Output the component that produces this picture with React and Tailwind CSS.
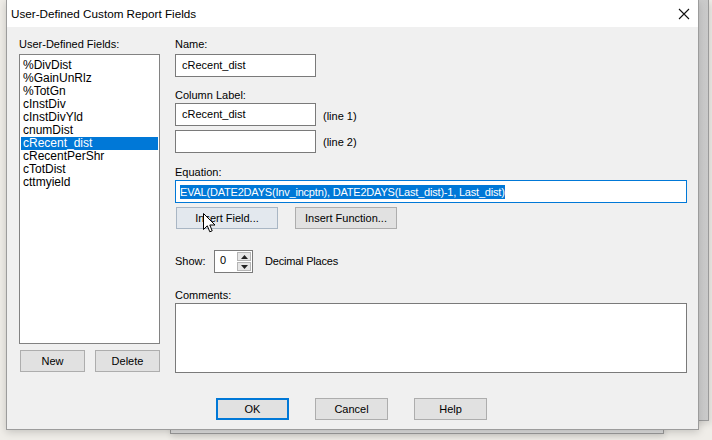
import React from 'react';

const font = { fontFamily: '"Liberation Sans", Arial, sans-serif' };

const fields = [
  '%DivDist',
  '%GainUnRlz',
  '%TotGn',
  'cInstDiv',
  'cInstDivYld',
  'cnumDist',
  'cRecent_dist',
  'cRecentPerShr',
  'cTotDist',
  'cttmyield',
];

const Btn = ({ children, className = '' }) => (
  <div
    className={`flex items-center justify-center h-[22px] bg-[#e1e1e1] border border-[#adadad] text-[11px] text-black ${className}`}
  >
    {children}
  </div>
);

const TextBox = ({ value, className = '' }) => (
  <div className={`h-[23px] bg-white border border-[#7a7a7a] flex items-center px-[6px] text-[11px] text-black ${className}`}>
    {value}
  </div>
);

const Cursor = () => (
  <svg width="13" height="21" viewBox="0 0 13 21" className="absolute left-[203px] top-[213px]">
    <path
      d="M0.5 0.5 L0.5 16.5 L4.3 12.8 L6.8 18.8 L9.2 17.8 L6.8 12 L12 12 Z"
      fill="white"
      stroke="black"
      strokeWidth="1"
      strokeLinejoin="miter"
    />
  </svg>
);

export default function App() {
  return (
    <div className="relative w-[712px] h-[440px] overflow-hidden bg-[#efede8]" style={font}>
      {/* windows behind */}
      <div className="absolute left-[660px] top-0 w-[49px] h-[421px] bg-gradient-to-r from-[#e4e4e4] to-[#c9c9c9] border-r border-b border-[#9a9a9a] shadow-[2px_3px_6px_rgba(0,0,0,0.12)]" />
      <div className="absolute left-[170px] top-[380px] w-[494px] h-[54px] bg-[#dedede] border border-[#9a9a9a] shadow-[1px_3px_6px_rgba(0,0,0,0.12)]" />

      {/* main dialog */}
      <div className="absolute left-[6px] top-0 w-[693px] h-[430px] bg-[#f0f0f0] border-l border-r border-b border-[#9c9c9c] shadow-[0_2px_8px_rgba(0,0,0,0.18)] flex flex-col">
        <div className="h-[27px] bg-white flex items-center justify-between pl-[4px] pr-[8px] shrink-0">
          <span className="text-[11.7px] text-black">User-Defined Custom Report Fields</span>
          <svg width="12" height="12" viewBox="0 0 12 12">
            <path d="M1 1 L11 11 M11 1 L1 11" stroke="#111" strokeWidth="1.1" />
          </svg>
        </div>

        <div className="flex pl-[12px] pt-[11px]">
          {/* left column */}
          <div className="w-[141px] flex flex-col">
            <div className="h-[13px] leading-[13px] text-[11px] text-black">User-Defined Fields:</div>
            <div className="mt-[3px] h-[290px] bg-white border border-[#828282] pt-[4px] px-[1px]">
              {fields.map((f) => (
                <div
                  key={f}
                  className={`h-[13px] leading-[13px] px-[2px] text-[12px] ${
                    f === 'cRecent_dist' ? 'bg-[#0078d7] text-white' : 'text-black'
                  }`}
                >
                  {f}
                </div>
              ))}
            </div>
            <div className="mt-[6px] flex justify-between pl-[1px]">
              <Btn className="w-[65px]">New</Btn>
              <Btn className="w-[65px]">Delete</Btn>
            </div>
          </div>

          {/* right column */}
          <div className="ml-[15px] w-[512px] flex flex-col">
            <div className="h-[13px] leading-[13px] text-[11px] text-black">Name:</div>
            <TextBox value="cRecent_dist" className="mt-[3px] w-[141px]" />

            <div className="mt-[12px] h-[13px] leading-[13px] text-[11px] text-black">Column Label:</div>
            <div className="mt-[1px] flex items-center">
              <TextBox value="cRecent_dist" className="w-[141px]" />
              <span className="ml-[7px] text-[11px] text-black pt-[4px]">(line 1)</span>
            </div>
            <div className="mt-[4px] flex items-center">
              <TextBox value="" className="w-[141px]" />
              <span className="ml-[7px] text-[11px] text-black pt-[2px]">(line 2)</span>
            </div>

            <div className="mt-[13px] h-[13px] leading-[13px] text-[11px] text-black">Equation:</div>
            <div className="mt-[1px] h-[23px] bg-white border border-[#0078d7] flex items-center px-[4px]">
              <span className="bg-[#0078d7] text-white text-[11px] leading-[14px] tracking-[-0.2px]">
                EVAL(DATE2DAYS(Inv_incptn), DATE2DAYS(Last_dist)-1, Last_dist)
              </span>
            </div>

            <div className="mt-[4px] flex gap-[17px] pl-[1px]">
              <div className="w-[102px] h-[22px] flex items-center justify-center bg-[#e3e8ee] border border-[#a9b6c4] text-[11px] text-black">
                Insert Field...
              </div>
              <Btn className="w-[102px]">Insert Function...</Btn>
            </div>

            <div className="mt-[21px] flex items-center">
              <span className="w-[39px] text-[11px] text-black">Show:</span>
              <div className="w-[39px] h-[23px] bg-white border border-[#7a7a7a] flex">
                <span className="flex-1 pl-[5px] text-[11px] leading-[19px] text-black">0</span>
                <div className="w-[16px] flex flex-col gap-[1px] p-[1px]">
                  <div className="flex-1 bg-[#e6e6e6] border border-[#b5b5b5] flex items-center justify-center">
                    <svg width="7" height="4" viewBox="0 0 7 4"><path d="M0 4 L3.5 0 L7 4 Z" fill="#222" /></svg>
                  </div>
                  <div className="flex-1 bg-[#e6e6e6] border border-[#b5b5b5] flex items-center justify-center">
                    <svg width="7" height="4" viewBox="0 0 7 4"><path d="M0 0 L3.5 4 L7 0 Z" fill="#222" /></svg>
                  </div>
                </div>
              </div>
              <span className="ml-[12px] text-[11px] tracking-[-0.2px] text-black">Decimal Places</span>
            </div>

            <div className="mt-[16px] h-[13px] leading-[13px] text-[11px] text-black">Comments:</div>
            <div className="mt-[1px] h-[70px] bg-white border border-[#7a7a7a]" />
          </div>
        </div>

        <div className="mt-[25px] flex pl-[209px] gap-[26px]">
          <div className="w-[73px] h-[22px] flex items-center justify-center bg-[#e1e1e1] border-2 border-[#0078d7] text-[11px] text-black">
            OK
          </div>
          <Btn className="w-[73px]">Cancel</Btn>
          <Btn className="w-[73px]">Help</Btn>
        </div>
      </div>

      <Cursor />
    </div>
  );
}
